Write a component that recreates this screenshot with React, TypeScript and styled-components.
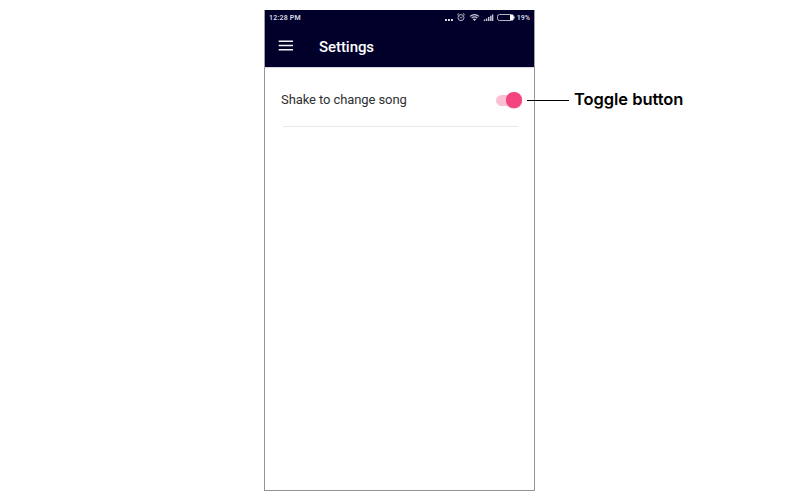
import React from 'react';
import styled, { createGlobalStyle } from 'styled-components';

const GlobalStyle = createGlobalStyle`
  *, *::before, *::after { box-sizing: border-box; }
  body { margin: 0; background: #fff; overflow: hidden; }
`;

const Stage = styled.main`
  width: 800px;
  height: 500px;
  padding: 10px 0 0 264px;
  display: flex;
  align-items: flex-start;
  background: #fff;
  font-family: Roboto, sans-serif;
`;

const Phone = styled.section`
  flex: none;
  width: 271px;
  height: 481px;
  display: flex;
  flex-direction: column;
  border: 1px solid #949494;
  border-top: 0;
  background: #fff;
`;

const Header = styled.header`
  height: 57px;
  background: #00002a;
  color: #fff;
  box-shadow: 0 1px 1px #d9d9e2;
`;

const StatusBar = styled.div`
  height: 15px;
  padding: 1px 4px 0;
  display: flex;
  align-items: center;
  justify-content: space-between;
  color: #dedee6;
  font-size: 7px;
  font-weight: 600;
  line-height: 14px;
`;

const Clock = styled.span`
  letter-spacing: 0.2px;
`;

const StatusIcons = styled.div`
  display: flex;
  align-items: center;
`;

const StatusGlyphs = styled.svg`
  display: block;
  margin: -1px 2px 0 0;
`;

const TitleBar = styled.div`
  height: 42px;
  padding-left: 13px;
  display: flex;
  align-items: center;
`;

const MenuButton = styled.button`
  width: 16px;
  height: 11px;
  margin: 0 25px 1px 0;
  padding: 0;
  border: 0;
  background: none;
  color: inherit;
`;

const MenuIcon = styled.svg`
  display: block;
`;

const Title = styled.h1`
  margin: 1px 0 0;
  font-size: 15px;
  font-weight: 500;
  line-height: 20px;
  letter-spacing: -0.06px;
`;

const SettingRow = styled.div`
  height: 60px;
  margin: 0 16px 0 18px;
  padding-top: 6px;
  display: flex;
  align-items: center;
  justify-content: space-between;
  border-bottom: 1px solid #e9e9e9;
`;

const SettingLabel = styled.span`
  margin-left: -2px;
  color: #303030;
  font-size: 13px;
  line-height: 18px;
  letter-spacing: -0.09px;
`;

const Switch = styled.button`
  width: 26px;
  height: 16px;
  margin: 1px -4px 0 0;
  padding: 0;
  display: flex;
  align-items: center;
  border: 0;
  background: none;
`;

const Track = styled.span`
  width: 24px;
  height: 11px;
  display: flex;
  align-items: center;
  border-radius: 6px;
  background: #fac1d5;
`;

const Thumb = styled.span`
  flex: none;
  width: 15.5px;
  height: 15.5px;
  margin-left: 10px;
  border-radius: 50%;
  background: #f4447f;
  box-shadow: 0 0.5px 1px #e9799f;
`;

const Callout = styled.div`
  height: 24px;
  margin: 78px 0 0 -8px;
  display: flex;
  align-items: center;
  z-index: 1;
`;

const Leader = styled.span`
  width: 42px;
  height: 1px;
  margin-top: 1px;
  background: #000;
`;

const CalloutText = styled.span`
  margin: -2px 0 0 5px;
  color: #000;
  font-family: Inter, sans-serif;
  font-size: 16.5px;
  font-weight: 600;
  line-height: 24px;
  letter-spacing: -0.05px;
  white-space: nowrap;
`;

export default function App() {
  return (
    <>
      <GlobalStyle />
      <Stage>
        <Phone>
          <Header>
            <StatusBar>
              <Clock>12:28 PM</Clock>
              <StatusIcons>
                <StatusGlyphs width="71" height="11" viewBox="0 0 71 11" fill="none" stroke="#c9c9d5">
                  <g fill="#e4e4ec" stroke="none">
                    <rect x="1" y="7" width="1.9" height="2" />
                    <rect x="4" y="7" width="1.9" height="2" />
                    <rect x="7" y="7" width="1.9" height="2" />
                  </g>
                  <circle cx="17" cy="5.6" r="3" strokeWidth=".9" />
                  <path d="M13.2 3 15 1.5M20.8 3 19 1.5M15.6 4.8 17 6.2 18.6 4.8" strokeWidth=".9" />
                  <path d="M26 4.4Q30.5 .8 35 4.4M27.6 6Q30.5 3.8 33.4 6" strokeWidth="1.2" />
                  <path d="M28.7 7.2Q30.5 5.9 32.3 7.2L30.5 9Z" fill="#c9c9d5" stroke="none" />
                  <path d="M40.5 9V7.6M42.6 9V6.4M44.7 9V5M46.8 9V3.8M48.6 9V2.4" strokeWidth="1.4" />
                  <rect x="53.5" y="2.5" width="16" height="6" rx="2" strokeWidth=".9" />
                  <path d="M66 3H69.2V8H66ZM69.5 4.5H70.6V6.5H69.5Z" fill="#fff" stroke="none" />
                </StatusGlyphs>
                <span>19%</span>
              </StatusIcons>
            </StatusBar>
            <TitleBar>
              <MenuButton aria-label="Menu">
                <MenuIcon width="16" height="11" viewBox="0 0 16 11" stroke="#f5f5f8" strokeWidth="1.6">
                  <path d="M.7 1.2H15M.7 5.5H15M.7 9.8H15" />
                </MenuIcon>
              </MenuButton>
              <Title>Settings</Title>
            </TitleBar>
          </Header>
          <SettingRow>
            <SettingLabel>Shake to change song</SettingLabel>
            <Switch role="switch" aria-checked="true" aria-label="Shake to change song">
              <Track><Thumb /></Track>
            </Switch>
          </SettingRow>
        </Phone>
        <Callout>
          <Leader />
          <CalloutText>Toggle button</CalloutText>
        </Callout>
      </Stage>
    </>
  );
}
